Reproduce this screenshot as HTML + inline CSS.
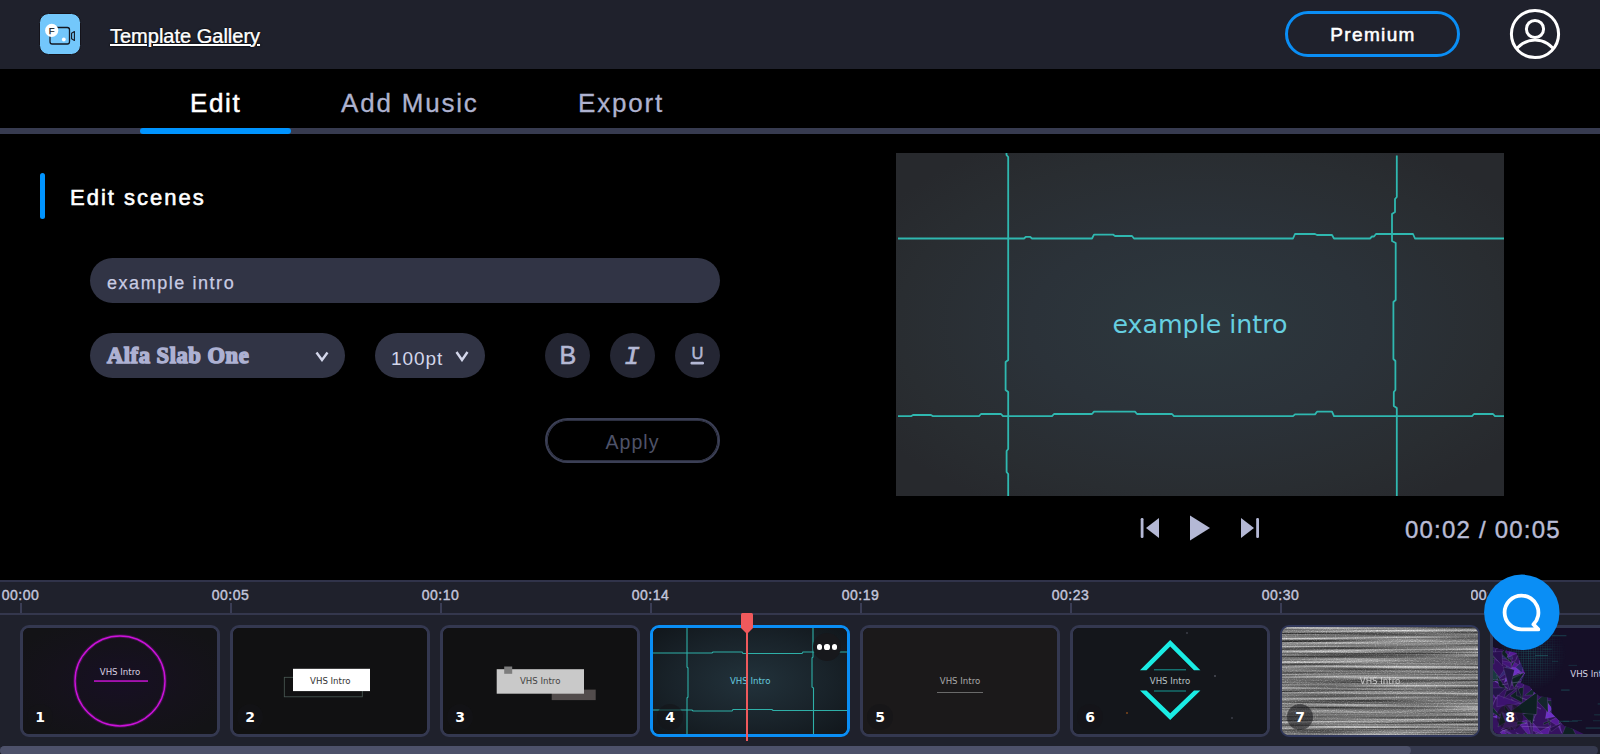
<!DOCTYPE html>
<html lang="en">
<head>
<meta charset="utf-8">
<title>Intro Maker</title>
<style>
*{box-sizing:border-box;margin:0;padding:0}
html,body{width:1600px;height:754px;overflow:hidden;background:#000;}
body{position:relative;font-family:"Liberation Sans",sans-serif;color:#fff;}
.abs{position:absolute}
#header{position:absolute;left:0;top:0;width:1600px;height:69px;background:#1f212c;}
#logo{position:absolute;left:39px;top:13px;width:42px;height:42px;}
#gallery{position:absolute;left:110px;top:24px;text-shadow:0 0 1px #000,0 0 2px #000;font-size:20px;line-height:24px;color:#fff;text-decoration:underline;letter-spacing:0;white-space:nowrap;-webkit-text-stroke:0.2px #fff;}
#premium{position:absolute;left:1285px;top:11px;width:175px;height:46px;border:3px solid #0a8ef5;border-radius:23px;text-align:center;font-size:19px;line-height:42px;letter-spacing:1.35px;color:#fff;-webkit-text-stroke:0.55px #fff;text-indent:1px;}
#avatar{position:absolute;left:1509px;top:8px;width:52px;height:52px;}
#tabs{position:absolute;left:0;top:69px;width:1600px;height:64px;background:#000;}
#tabline{position:absolute;left:0;top:128px;width:1600px;height:6px;background:#373b50;}
#tabactive{position:absolute;left:140px;top:128px;width:151px;height:6px;background:#0094ff;border-radius:3px;}
.tab{position:absolute;top:87px;font-size:26px;line-height:32px;white-space:nowrap;color:#aeb2cf;letter-spacing:1.8px;-webkit-text-stroke:0.3px #aeb2cf;}
.tab.on{color:#fff;-webkit-text-stroke:0.5px #fff;letter-spacing:1.6px}
#bar{position:absolute;left:40px;top:173px;width:5px;height:46px;border-radius:3px;background:#0094ff;}
#h2{position:absolute;left:70px;top:184px;font-size:22px;line-height:28px;white-space:nowrap;letter-spacing:2px;-webkit-text-stroke:0.6px #fff;}
.pill{position:absolute;background:#313445;border-radius:23px;height:45px;}
.pill span{position:absolute;white-space:nowrap;color:#c9cce3;}
.circ{position:absolute;top:333px;width:45px;height:45px;border-radius:50%;background:#242633;}
#apply{position:absolute;left:545px;top:418px;width:175px;height:45px;border:2px solid #3b3f55;box-shadow:inset 0 0 0 0.8px #3b3f55;border-radius:23px;text-align:center;font-size:19.5px;line-height:44px;color:#4e5268;letter-spacing:1px;}
#preview{position:absolute;left:896px;top:153px;width:608px;height:343px;}
#time{position:absolute;left:1405px;top:515.6px;font-size:24px;line-height:28px;color:#b9bcd6;white-space:nowrap;letter-spacing:1.2px;-webkit-text-stroke:0.4px #b9bcd6;}
#timeline{position:absolute;left:0;top:580px;width:1600px;height:174px;background:#1f212c;border-top:2px solid #30334a;}
#rline{position:absolute;left:0;top:613px;width:1600px;height:2px;background:#34374d;}
.tk{position:absolute;top:603px;width:2px;height:10px;background:#3a3d55;}
.tl{position:absolute;top:586px;width:80px;text-align:center;font-size:14px;line-height:18px;color:#c3c6dc;letter-spacing:0.5px;white-space:nowrap;-webkit-text-stroke:0.4px #c3c6dc;}
.th{position:absolute;top:625px;width:200px;height:112px;border:3px solid #343850;border-radius:9px;overflow:hidden;background:#121212;}
.th svg{position:absolute;left:-1px;top:-1px;}
.num{position:absolute;left:4px;top:76px;width:26px;height:26px;border-radius:50%;background:rgba(20,20,24,.55);color:#fff;font-family:"DejaVu Sans","Liberation Sans",sans-serif;font-weight:bold;font-size:14px;line-height:26px;text-align:center;}
.th.sel{border-color:#0a8ef5;}
.th.lt{border-width:2px;border-color:#30375a;}
.th.lt svg{left:0;top:0}
.th.lt .num{left:5px;top:77px}
.more{position:absolute;left:160px;top:5px;width:28px;height:28px;border-radius:50%;background:#17181c;}
.more i{position:absolute;top:11.4px;width:5.2px;height:5.2px;border-radius:50%;background:#fff;}
.more i:nth-child(1){left:3.6px}.more i:nth-child(2){left:11.4px}.more i:nth-child(3){left:19.2px}
#ph{position:absolute;left:746px;top:626px;width:2px;height:115px;background:#f0595c;}
#phh{position:absolute;left:741px;top:613px;width:12px;height:21px;}
#scroll{position:absolute;left:0;top:746px;width:1598px;height:9px;background:#363a4f;border-radius:5px;}
#scrollthumb{position:absolute;left:0;top:746px;width:1411px;height:9px;background:#4d516a;border-radius:5px;}
#chat{position:absolute;left:1484px;top:574px;width:78px;height:78px;}
</style>
</head>
<body>
<div id="header">
  <svg id="logo" viewBox="-1 -1 42 42">
    <rect x="-0.5" y="-0.5" width="41" height="41" rx="9" fill="#73c7fb" stroke="#15131a" stroke-width="1"/>
    <rect x="10" y="13.5" width="19.5" height="16.5" rx="2.2" fill="none" stroke="#141822" stroke-width="1.3"/>
    <path d="M31.6 19.2 L34.4 17.6 V26.4 L31.6 24.8 Z" fill="none" stroke="#141822" stroke-width="1.1" stroke-linejoin="round"/>
    <circle cx="11.7" cy="16.4" r="6.6" fill="#fff"/>
    <circle cx="23.8" cy="25.5" r="1.9" fill="#fff"/>
    <text x="11.7" y="19.8" font-family="Liberation Sans, sans-serif" font-size="9.5" fill="#141822" stroke="#141822" stroke-width="0.25" text-anchor="middle">F</text>
  </svg>
  <div id="gallery">Template Gallery</div>
  <div id="premium">Premium</div>
  <svg id="avatar" viewBox="0 0 52 52">
    <defs><clipPath id="avc"><circle cx="26" cy="26" r="23.5"/></clipPath></defs>
    <circle cx="26" cy="26" r="23.600" fill="none" stroke="#fff" stroke-width="3"/>
    <circle cx="26" cy="21" r="8.600" fill="none" stroke="#fff" stroke-width="3"/>
    <path d="M5 45 A23.500 23.500 0 0 1 47 45" fill="none" stroke="#fff" stroke-width="3" clip-path="url(#avc)"/>
  </svg>
</div>
<div id="tabs"></div>
<div id="tabline"></div>
<div id="tabactive"></div>
<div class="tab on" style="left:190px">Edit</div>
<div class="tab" style="left:341px">Add Music</div>
<div class="tab" style="left:578px">Export</div>

<div id="bar"></div>
<div id="h2">Edit scenes</div>

<div class="pill" style="left:90px;top:258px;width:630px"><span style="left:17px;top:13.5px;font-size:18px;line-height:22px;letter-spacing:1.55px;-webkit-text-stroke:0.25px #c9cce3">example intro</span></div>
<div class="pill" style="left:90px;top:333px;width:255px"><span style="left:17px;top:9px;font-family:'Liberation Serif',serif;font-weight:bold;font-size:22.5px;line-height:28px;color:#adb1d2;-webkit-text-stroke:1.5px #adb1d2;letter-spacing:0.55px">Alfa Slab One</span>
  <svg class="abs" style="left:224px;top:17px" width="16" height="12" viewBox="0 0 16 12"><path d="M2.500 2.500 L8 10 L13.500 2.500" fill="none" stroke="#d3d6ea" stroke-width="2.400"/></svg>
</div>
<div class="pill" style="left:375px;top:333px;width:110px"><span style="left:16px;top:13.5px;font-size:19px;line-height:24px;letter-spacing:0.95px;color:#d3d6ea">100pt</span>
  <svg class="abs" style="left:79px;top:17px" width="16" height="12" viewBox="0 0 16 12"><path d="M2.500 2 L8 10 L13.500 2" fill="none" stroke="#d3d6ea" stroke-width="2.400"/></svg>
</div>
<div class="circ" style="left:545px"><svg width="45" height="45" viewBox="0 0 45 45"><text x="22.8" y="31.4" text-anchor="middle" font-family="Liberation Sans, sans-serif" font-size="25" fill="#b4b8d4" stroke="#b4b8d4" stroke-width="0.6">B</text></svg></div>
<div class="circ" style="left:610px"><svg width="45" height="45" viewBox="0 0 45 45"><text x="22" y="31" text-anchor="middle" font-family="Liberation Mono, monospace" font-style="italic" font-size="26" fill="#b4b8d4" stroke="#b4b8d4" stroke-width="0.6">I</text></svg></div>
<div class="circ" style="left:675px"><svg width="45" height="45" viewBox="0 0 45 45"><text x="22.5" y="26.3" text-anchor="middle" font-family="Liberation Sans, sans-serif" font-size="16.5" fill="#b4b8d4" stroke="#b4b8d4" stroke-width="0.5">U</text><rect x="15.500" y="28.800" width="13.500" height="2.600" rx="1.2" fill="#b4b8d4"/></svg></div>
<div id="apply">Apply</div>

<svg id="preview" viewBox="0 0 608 343" preserveAspectRatio="none">
  <defs>
    <radialGradient id="pg" cx="50%" cy="50%" r="62%"><stop offset="0" stop-color="#2d383e"/><stop offset="0.45" stop-color="#2b3239"/><stop offset="0.8" stop-color="#292d31"/><stop offset="1" stop-color="#27292d"/></radialGradient>
  </defs>
  <rect width="608" height="343" fill="url(#pg)"/>
  <g fill="none" stroke="#2fb8b0" stroke-width="1.800" stroke-linejoin="round">
    <path d="M2 85.5 H128 L130 83.8 H134 L136 85.5 H196 L198 81.6 H217 L219 83 H236 L238 85.5 H397 L399 81 H419 L421 82 H436 L438 85.5 H474 L476 83.5 H478 L480 81 H517 L519 85.5 H608"/>
    <path d="M2 263.2 H15 L17 262 H35 L37 263.2 H83 L85 261 H105 L107 263.2 H156 L158 261 H196 L198 258.7 H239 L241 261 H276 L278 263.2 H397 L399 261.4 H419 L421 258.7 H436 L438 263.2 H576 L578 261 H597 L599 263.2 H608"/>
    <path d="M110.5 0 V2 L112.2 4 V207 L109.6 209 V237 L112.2 239 V296 L110.6 298 V319 L112.2 321 V343"/>
    <path d="M500.8 2.5 V44 L499 46 V59 L496 61 V88 L499.7 90 V147 L497.4 149 V206 L499.4 208 V237 L497.8 239 V253 L500.8 255 V343"/>
  </g>
  <text x="304" y="180" text-anchor="middle" font-family="DejaVu Sans, Liberation Sans, sans-serif" font-size="25.3" fill="#66cfe0">example intro</text>
</svg>

<svg class="abs" style="left:1138px;top:512px" width="126" height="32" viewBox="0 0 126 32">
  <g fill="#b4b8d5">
    <rect x="2.700" y="6" width="2.800" height="20" rx="1.200"/><path d="M21 6 V26 L8 16 Z"/>
    <path d="M52 3.500 L72 16 L52 28.500 Z"/>
    <path d="M103 6 V26 L116 16 Z"/><rect x="118.200" y="6" width="2.800" height="20" rx="1.200"/>
  </g>
</svg>
<div id="time">00:02 / 00:05</div>

<div id="timeline"></div>
<div id="rline"></div>
<div id="tlabels">
<div class="tk" style="left:20px"></div><div class="tl" style="left:-19.5px">00:00</div>
<div class="tk" style="left:230px"></div><div class="tl" style="left:190.5px">00:05</div>
<div class="tk" style="left:440px"></div><div class="tl" style="left:400.5px">00:10</div>
<div class="tk" style="left:650px"></div><div class="tl" style="left:610.5px">00:14</div>
<div class="tk" style="left:860px"></div><div class="tl" style="left:820.5px">00:19</div>
<div class="tk" style="left:1070px"></div><div class="tl" style="left:1030.5px">00:23</div>
<div class="tk" style="left:1280px"></div><div class="tl" style="left:1240.5px">00:30</div>
<div class="tk" style="left:1490px"></div><div class="tl" style="left:1470.5px;width:17px;overflow:hidden;text-align:left">00:35</div>
</div><!--/tl-->
<div id="thumbs">
<div class="th" style="left:20px"><svg width="196" height="108" viewBox="0 0 196 108"><defs><radialGradient id="g1" cx="50%" cy="50%" r="60%"><stop offset="0" stop-color="#170f24"/><stop offset="0.55" stop-color="#15121b"/><stop offset="1" stop-color="#131316"/></radialGradient></defs>
<rect width="196" height="108" fill="url(#g1)"/>
<circle cx="98" cy="54" r="45" fill="none" stroke="#8a0f9a" stroke-width="3.600" opacity="0.35"/>
<circle cx="98" cy="54" r="45" fill="none" stroke="#cc12da" stroke-width="1.400"/>
<rect x="72" y="53.300" width="54" height="1.500" fill="#c613d2"/>
<text x="98" y="48" text-anchor="middle" font-family="DejaVu Sans, Liberation Sans, sans-serif" font-size="8.6" fill="#d9cfe0" opacity="1">VHS Intro</text></svg><div class="num">1</div></div>
<div class="th" style="left:230px"><svg width="196" height="108" viewBox="0 0 196 108"><rect width="196" height="108" fill="#111112"/>
<rect x="52.300" y="50.300" width="78" height="19.500" fill="none" stroke="#4a5a55" stroke-width="0.8"/>
<rect x="61" y="41.800" width="77" height="22.300" fill="#ffffff"/>
<text x="98.3" y="57.3" text-anchor="middle" font-family="DejaVu Sans, Liberation Sans, sans-serif" font-size="8.6" fill="#333" opacity="1">VHS Intro</text></svg><div class="num">2</div></div>
<div class="th" style="left:440px"><svg width="196" height="108" viewBox="0 0 196 108"><rect width="196" height="108" fill="#111112"/>
<rect x="109.700" y="62.600" width="44" height="10.500" fill="#524c4c"/>
<rect x="54.700" y="42.200" width="87.300" height="24.500" fill="#c9c9c9"/>
<rect x="62.200" y="39.500" width="8" height="7.300" fill="#7d7d7d"/>
<text x="98.2" y="57.2" text-anchor="middle" font-family="DejaVu Sans, Liberation Sans, sans-serif" font-size="8.6" fill="#444" opacity="1">VHS Intro</text></svg><div class="num">3</div></div>
<div class="th sel" style="left:650px"><svg width="196" height="108" viewBox="0 0 196 108"><defs><radialGradient id="g4" cx="50%" cy="50%" r="65%"><stop offset="0" stop-color="#22323b"/><stop offset="0.6" stop-color="#19232a"/><stop offset="1" stop-color="#12181d"/></radialGradient></defs>
<rect width="196" height="108" fill="url(#g4)"/>
<g fill="none" stroke="#2eb0a8" stroke-width="1.100"><path d="M0 26 H60 L61 25 H90 L91 26.500 H150 L151 25 H196"/><path d="M0 83 H40 L41 84 H80 L81 82.500 H120 L121 83.500 H196"/><path d="M35 0 V40 L36 41 V70 L35 71 V108"/><path d="M161 0 V30 L160 31 V60 L161.500 61 V108"/></g>
<text x="98.2" y="57.2" text-anchor="middle" font-family="DejaVu Sans, Liberation Sans, sans-serif" font-size="8.6" fill="#66cade" opacity="1">VHS Intro</text></svg><div class="num">4</div><div class="more"><i></i><i></i><i></i></div></div>
<div class="th" style="left:860px"><svg width="196" height="108" viewBox="0 0 196 108"><rect width="196" height="108" fill="#1b191a"/>
<rect x="75" y="65" width="46" height="1" fill="#6a6a6a"/>
<text x="98" y="57.2" text-anchor="middle" font-family="DejaVu Sans, Liberation Sans, sans-serif" font-size="8.6" fill="#a8a8a8" opacity="1">VHS Intro</text></svg><div class="num">5</div></div>
<div class="th" style="left:1070px"><svg width="196" height="108" viewBox="0 0 196 108"><rect width="196" height="108" fill="#14161b"/>
<g fill="#1aece4"><path d="M68 43.300 L98.200 13 L128.400 43.300 H122 L98.200 19.600 L74.500 43.300 Z"/><path d="M68 63.600 H74.500 L98.200 86.300 L122 63.600 H128.400 L98.200 93 Z"/></g>
<g stroke="#159a96" stroke-width="1"><path d="M82 42.800 H114"/><path d="M82 64 H114"/></g>
<circle cx="55" cy="86" r="0.8" fill="#c96a1a"/><circle cx="143" cy="49" r="0.7" fill="#889"/><circle cx="160" cy="91" r="0.7" fill="#667"/><circle cx="115" cy="6" r="0.7" fill="#667"/>
<text x="98" y="57.2" text-anchor="middle" font-family="DejaVu Sans, Liberation Sans, sans-serif" font-size="8.6" fill="#b8c2c4" opacity="1">VHS Intro</text></svg><div class="num">6</div></div>
<div class="th lt" style="left:1280px"><svg width="196" height="108" viewBox="0 0 196 108"><defs><filter id="nz" x="0" y="0" width="100%" height="100%" color-interpolation-filters="sRGB">
<feTurbulence type="fractalNoise" baseFrequency="0.006 0.38" numOctaves="2" seed="11" result="a"/>
<feColorMatrix in="a" type="matrix" values="1.0 0 0 0 -0.03  1.0 0 0 0 -0.03  1.0 0 0 0 -0.03  0 0 0 0 1" result="b"/>
<feTurbulence type="fractalNoise" baseFrequency="0.9 0.9" numOctaves="1" seed="5" result="c"/>
<feColorMatrix in="c" type="matrix" values="0.5 0 0 0 -0.25  0.5 0 0 0 -0.25  0.5 0 0 0 -0.25  0 0 0 0 1" result="d"/>
<feComposite in="b" in2="d" operator="arithmetic" k1="0" k2="1" k3="1" k4="0"/>
</filter></defs>
<rect width="196" height="108" fill="#858585"/>
<rect width="196" height="108" filter="url(#nz)"/>
<text x="98" y="57.2" text-anchor="middle" font-family="DejaVu Sans, Liberation Sans, sans-serif" font-size="8.6" fill="#e2e2e2" opacity="0.8">VHS Intro</text></svg><div class="num">7</div></div>
<div class="th" style="left:1490px"><svg width="196" height="108" viewBox="0 0 196 108"><defs><pattern id="dots" width="2.400" height="2.400" patternUnits="userSpaceOnUse"><rect x="0" y="0" width="2.400" height="0.700" fill="#1d5f64" opacity="0.55"/><rect x="0" y="0" width="0.700" height="2.400" fill="#1d5f64" opacity="0.55"/></pattern>
<clipPath id="pc"><polygon points="0,20.3 24.5,26.1 32.8,46 28.6,56 37.7,59.3 41,64.3 47.7,69.2 59.3,70.9 59.3,85.8 65.9,92.4 72.5,99 82.5,102.4 92.4,107.3 94,108 0,108"/></clipPath>
<radialGradient id="g8" cx="35%" cy="35%" r="45%"><stop offset="0" stop-color="#fff" stop-opacity="1"/><stop offset="1" stop-color="#fff" stop-opacity="0"/></radialGradient>
<mask id="m8"><rect x="10" y="0" width="80" height="80" fill="url(#g8)"/></mask></defs>
<rect width="196" height="108" fill="#150f27"/>
<rect x="10" y="0" width="80" height="80" fill="url(#dots)" mask="url(#m8)"/>
<rect x="177.7" y="17.1" width="5.2" height="0.900" fill="#1f6a6e" opacity="0.33"/><rect x="48.5" y="99.5" width="12.4" height="0.900" fill="#1f6a6e" opacity="0.69"/><rect x="63.5" y="93.8" width="13.5" height="0.900" fill="#1f6a6e" opacity="0.53"/><rect x="69.1" y="62.6" width="8.5" height="0.900" fill="#1f6a6e" opacity="0.65"/><rect x="80.1" y="93.1" width="10.0" height="0.900" fill="#1f6a6e" opacity="0.31"/><rect x="184.3" y="27.9" width="15.6" height="0.900" fill="#1f6a6e" opacity="0.37"/><rect x="155.0" y="65.3" width="9.3" height="0.900" fill="#1f6a6e" opacity="0.59"/><rect x="110.2" y="17.5" width="14.9" height="0.900" fill="#1f6a6e" opacity="0.50"/><rect x="109.8" y="100.7" width="5.5" height="0.900" fill="#1f6a6e" opacity="0.57"/><rect x="182.7" y="70.2" width="12.2" height="0.900" fill="#1f6a6e" opacity="0.34"/><rect x="47.8" y="12.4" width="5.1" height="0.900" fill="#1f6a6e" opacity="0.55"/><rect x="60.1" y="8.3" width="14.3" height="0.900" fill="#1f6a6e" opacity="0.58"/><rect x="155.6" y="38.9" width="15.3" height="0.900" fill="#1f6a6e" opacity="0.33"/><rect x="60.1" y="33.9" width="6.1" height="0.900" fill="#1f6a6e" opacity="0.37"/><rect x="146.8" y="13.2" width="15.0" height="0.900" fill="#1f6a6e" opacity="0.55"/><rect x="162.1" y="8.7" width="5.8" height="0.900" fill="#1f6a6e" opacity="0.66"/><rect x="158.1" y="33.2" width="8.1" height="0.900" fill="#1f6a6e" opacity="0.55"/><rect x="181.5" y="37.9" width="10.2" height="0.900" fill="#1f6a6e" opacity="0.64"/><rect x="43.1" y="28.1" width="12.9" height="0.900" fill="#1f6a6e" opacity="0.60"/><rect x="178.2" y="94.4" width="15.9" height="0.900" fill="#1f6a6e" opacity="0.37"/><rect x="102.1" y="87.4" width="15.1" height="0.900" fill="#1f6a6e" opacity="0.44"/><rect x="76.5" y="37.9" width="8.6" height="0.900" fill="#1f6a6e" opacity="0.35"/><rect x="100.9" y="93.3" width="11.2" height="0.900" fill="#1f6a6e" opacity="0.34"/><rect x="93.7" y="100.6" width="14.9" height="0.900" fill="#1f6a6e" opacity="0.64"/><rect x="103.3" y="43.7" width="6.7" height="0.900" fill="#1f6a6e" opacity="0.59"/><rect x="129.6" y="12.6" width="4.8" height="0.900" fill="#1f6a6e" opacity="0.48"/><rect x="112.1" y="21.3" width="15.0" height="0.900" fill="#1f6a6e" opacity="0.38"/><rect x="105.7" y="76.5" width="11.1" height="0.900" fill="#1f6a6e" opacity="0.55"/><rect x="50.6" y="21.7" width="9.4" height="0.900" fill="#1f6a6e" opacity="0.36"/><rect x="71.3" y="93.8" width="14.5" height="0.900" fill="#1f6a6e" opacity="0.46"/><rect x="171.9" y="93.5" width="11.5" height="0.900" fill="#1f6a6e" opacity="0.60"/><rect x="139.1" y="37.5" width="11.1" height="0.900" fill="#1f6a6e" opacity="0.38"/><rect x="149.9" y="76.5" width="5.8" height="0.900" fill="#1f6a6e" opacity="0.48"/><rect x="176.4" y="13.2" width="15.3" height="0.900" fill="#1f6a6e" opacity="0.51"/>
<g clip-path="url(#pc)"><rect width="100" height="108" fill="#35125f"/><path d="M12.0 75.4 L19.6 89.7 L12.8 82.3 Z" fill="#0e2022" stroke="#b7a2e6" stroke-width="0.35" stroke-opacity="0.45"/><path d="M72.8 7.1 L82.1 29.5 L80.4 15.5 Z" fill="#1a3a40" stroke="#b7a2e6" stroke-width="0.35" stroke-opacity="0.45"/><path d="M57.5 11.9 L66.3 16.7 L50.9 25.4 Z" fill="#3d1370" stroke="#b7a2e6" stroke-width="0.35" stroke-opacity="0.45"/><path d="M80.6 16.2 L71.1 20.6 L76.4 23.2 Z" fill="#5f1fa4" stroke="#b7a2e6" stroke-width="0.35" stroke-opacity="0.45"/><path d="M85.6 43.5 L81.8 38.4 L80.8 24.9 Z" fill="#551b96" stroke="#b7a2e6" stroke-width="0.35" stroke-opacity="0.45"/><path d="M45.0 53.9 L47.8 62.1 L51.9 49.7 Z" fill="#551b96" stroke="#b7a2e6" stroke-width="0.35" stroke-opacity="0.45"/><path d="M38.0 26.2 L34.6 18.4 L35.4 22.4 Z" fill="#0e2022" stroke="#b7a2e6" stroke-width="0.35" stroke-opacity="0.45"/><path d="M41.7 51.6 L56.9 56.5 L48.2 54.4 Z" fill="#241548" stroke="#b7a2e6" stroke-width="0.35" stroke-opacity="0.45"/><path d="M11.2 30.1 L10.8 18.9 L21.1 36.7 Z" fill="#0e2022" stroke="#b7a2e6" stroke-width="0.35" stroke-opacity="0.45"/><path d="M39.4 122.2 L36.4 107.3 L29.3 122.0 Z" fill="#11292b" stroke="#b7a2e6" stroke-width="0.35" stroke-opacity="0.45"/><path d="M57.1 49.1 L47.8 65.4 L55.4 48.6 Z" fill="#0e2022" stroke="#b7a2e6" stroke-width="0.35" stroke-opacity="0.45"/><path d="M20.8 32.1 L17.8 22.3 L8.3 31.6 Z" fill="#2d2466" stroke="#b7a2e6" stroke-width="0.35" stroke-opacity="0.45"/><path d="M98.8 58.1 L77.0 58.2 L95.1 61.5 Z" fill="#551b96" stroke="#b7a2e6" stroke-width="0.35" stroke-opacity="0.45"/><path d="M31.7 58.3 L30.2 75.7 L18.0 69.0 Z" fill="#0e2022" stroke="#b7a2e6" stroke-width="0.35" stroke-opacity="0.45"/><path d="M79.5 80.4 L88.5 65.5 L73.8 64.7 Z" fill="#521890" stroke="#b7a2e6" stroke-width="0.35" stroke-opacity="0.45"/><path d="M54.4 88.2 L57.2 98.2 L58.6 97.3 Z" fill="#11292b" stroke="#b7a2e6" stroke-width="0.35" stroke-opacity="0.45"/><path d="M18.4 102.7 L15.9 98.4 L18.4 90.7 Z" fill="#521890" stroke="#b7a2e6" stroke-width="0.35" stroke-opacity="0.45"/><path d="M36.1 106.2 L29.3 108.4 L36.9 104.0 Z" fill="#0e2022" stroke="#b7a2e6" stroke-width="0.35" stroke-opacity="0.45"/><path d="M29.1 45.8 L36.3 58.4 L23.5 48.6 Z" fill="#2d2466" stroke="#b7a2e6" stroke-width="0.35" stroke-opacity="0.45"/><path d="M50.8 49.9 L61.2 40.2 L58.1 43.2 Z" fill="#0e2022" stroke="#b7a2e6" stroke-width="0.35" stroke-opacity="0.45"/><path d="M19.8 33.9 L18.8 55.9 L39.3 45.0 Z" fill="#521890" stroke="#b7a2e6" stroke-width="0.35" stroke-opacity="0.45"/><path d="M64.3 91.8 L54.7 73.5 L67.5 73.9 Z" fill="#14262c" stroke="#b7a2e6" stroke-width="0.35" stroke-opacity="0.45"/><path d="M65.3 87.7 L63.5 94.1 L69.8 106.3 Z" fill="#5f1fa4" stroke="#b7a2e6" stroke-width="0.35" stroke-opacity="0.45"/><path d="M1.8 26.9 L-1.3 35.2 L2.1 37.2 Z" fill="#14262c" stroke="#b7a2e6" stroke-width="0.35" stroke-opacity="0.45"/><path d="M22.8 110.6 L29.9 113.9 L10.6 100.2 Z" fill="#241548" stroke="#b7a2e6" stroke-width="0.35" stroke-opacity="0.45"/><path d="M78.5 85.1 L85.4 82.9 L87.3 92.2 Z" fill="#11292b" stroke="#b7a2e6" stroke-width="0.35" stroke-opacity="0.45"/><path d="M69.1 39.3 L61.8 44.5 L63.0 31.0 Z" fill="#2e1b5e" stroke="#b7a2e6" stroke-width="0.35" stroke-opacity="0.45"/><path d="M89.3 68.5 L79.9 62.8 L84.2 64.0 Z" fill="#14262c" stroke="#b7a2e6" stroke-width="0.35" stroke-opacity="0.45"/><path d="M53.4 91.5 L56.1 76.5 L66.1 89.0 Z" fill="#6d2fc6" stroke="#b7a2e6" stroke-width="0.35" stroke-opacity="0.45"/><path d="M-0.5 67.0 L-5.9 56.9 L-1.5 58.2 Z" fill="#241548" stroke="#b7a2e6" stroke-width="0.35" stroke-opacity="0.45"/><path d="M10.3 52.6 L20.8 50.6 L19.8 48.9 Z" fill="#1a3a40" stroke="#b7a2e6" stroke-width="0.35" stroke-opacity="0.45"/><path d="M41.6 75.0 L43.8 75.7 L27.8 70.4 Z" fill="#5f1fa4" stroke="#b7a2e6" stroke-width="0.35" stroke-opacity="0.45"/><path d="M44.3 85.6 L39.5 96.7 L40.6 95.7 Z" fill="#342672" stroke="#b7a2e6" stroke-width="0.35" stroke-opacity="0.45"/><path d="M13.9 21.6 L17.0 33.9 L5.4 23.3 Z" fill="#0e2022" stroke="#b7a2e6" stroke-width="0.35" stroke-opacity="0.45"/><path d="M33.4 46.1 L36.8 48.2 L24.3 45.4 Z" fill="#6d2fc6" stroke="#b7a2e6" stroke-width="0.35" stroke-opacity="0.45"/><path d="M55.6 55.8 L39.3 63.4 L42.7 43.7 Z" fill="#6d2fc6" stroke="#b7a2e6" stroke-width="0.35" stroke-opacity="0.45"/><path d="M45.0 73.6 L56.1 85.6 L55.2 65.1 Z" fill="#14262c" stroke="#b7a2e6" stroke-width="0.35" stroke-opacity="0.45"/><path d="M74.6 37.7 L74.7 49.3 L61.0 48.5 Z" fill="#6d2fc6" stroke="#b7a2e6" stroke-width="0.35" stroke-opacity="0.45"/><path d="M-0.3 55.9 L0.6 41.7 L7.4 50.6 Z" fill="#1a3a40" stroke="#b7a2e6" stroke-width="0.35" stroke-opacity="0.45"/><path d="M23.0 117.3 L25.4 108.7 L7.1 109.7 Z" fill="#11292b" stroke="#b7a2e6" stroke-width="0.35" stroke-opacity="0.45"/><path d="M33.2 94.3 L42.7 93.2 L38.3 94.0 Z" fill="#0e2022" stroke="#b7a2e6" stroke-width="0.35" stroke-opacity="0.45"/><path d="M67.3 47.5 L65.6 28.8 L73.8 39.0 Z" fill="#2a1050" stroke="#b7a2e6" stroke-width="0.35" stroke-opacity="0.45"/><path d="M67.1 86.4 L70.1 87.9 L67.4 89.1 Z" fill="#2a1050" stroke="#b7a2e6" stroke-width="0.35" stroke-opacity="0.45"/><path d="M15.4 87.9 L9.6 86.3 L10.0 84.8 Z" fill="#4a1684" stroke="#b7a2e6" stroke-width="0.35" stroke-opacity="0.45"/><path d="M-1.8 91.4 L-10.7 73.4 L1.8 87.1 Z" fill="#551b96" stroke="#b7a2e6" stroke-width="0.35" stroke-opacity="0.45"/><path d="M52.7 13.8 L59.1 20.4 L61.8 24.9 Z" fill="#5f1fa4" stroke="#b7a2e6" stroke-width="0.35" stroke-opacity="0.45"/><path d="M77.5 93.8 L88.4 96.7 L76.5 95.1 Z" fill="#5f1fa4" stroke="#b7a2e6" stroke-width="0.35" stroke-opacity="0.45"/><path d="M74.6 46.9 L64.2 41.8 L72.9 40.1 Z" fill="#2e1b5e" stroke="#b7a2e6" stroke-width="0.35" stroke-opacity="0.45"/><path d="M49.0 81.6 L48.4 82.1 L40.4 78.2 Z" fill="#4a1684" stroke="#b7a2e6" stroke-width="0.35" stroke-opacity="0.45"/><path d="M26.1 96.7 L22.4 102.6 L18.2 98.2 Z" fill="#551b96" stroke="#b7a2e6" stroke-width="0.35" stroke-opacity="0.45"/><path d="M48.8 111.1 L43.4 105.3 L51.2 111.1 Z" fill="#2a1050" stroke="#b7a2e6" stroke-width="0.35" stroke-opacity="0.45"/><path d="M62.3 79.7 L76.3 79.5 L73.7 80.7 Z" fill="#5f1fa4" stroke="#b7a2e6" stroke-width="0.35" stroke-opacity="0.45"/><path d="M27.2 33.6 L27.6 37.4 L29.9 26.6 Z" fill="#521890" stroke="#b7a2e6" stroke-width="0.35" stroke-opacity="0.45"/><path d="M51.6 97.9 L51.7 95.7 L63.0 92.1 Z" fill="#0e2022" stroke="#b7a2e6" stroke-width="0.35" stroke-opacity="0.45"/><path d="M51.6 16.9 L44.6 25.5 L55.6 24.5 Z" fill="#521890" stroke="#b7a2e6" stroke-width="0.35" stroke-opacity="0.45"/><path d="M41.0 118.5 L33.8 110.2 L23.8 105.5 Z" fill="#551b96" stroke="#b7a2e6" stroke-width="0.35" stroke-opacity="0.45"/><path d="M21.3 109.1 L17.6 105.4 L9.1 102.5 Z" fill="#551b96" stroke="#b7a2e6" stroke-width="0.35" stroke-opacity="0.45"/><path d="M49.6 47.7 L50.6 48.7 L69.5 60.2 Z" fill="#2e1b5e" stroke="#b7a2e6" stroke-width="0.35" stroke-opacity="0.45"/><path d="M30.4 60.9 L18.9 58.0 L33.2 53.7 Z" fill="#3d1370" stroke="#b7a2e6" stroke-width="0.35" stroke-opacity="0.45"/><path d="M55.7 54.6 L58.6 57.0 L54.9 54.3 Z" fill="#521890" stroke="#b7a2e6" stroke-width="0.35" stroke-opacity="0.45"/><path d="M34.4 40.6 L36.2 37.6 L34.6 37.4 Z" fill="#2a1050" stroke="#b7a2e6" stroke-width="0.35" stroke-opacity="0.45"/><path d="M12.3 55.6 L31.9 41.3 L17.3 40.2 Z" fill="#6d2fc6" stroke="#b7a2e6" stroke-width="0.35" stroke-opacity="0.45"/><path d="M88.1 101.7 L88.0 104.8 L91.3 93.1 Z" fill="#241548" stroke="#b7a2e6" stroke-width="0.35" stroke-opacity="0.45"/><path d="M18.9 49.4 L32.5 45.7 L21.9 61.2 Z" fill="#0e2022" stroke="#b7a2e6" stroke-width="0.35" stroke-opacity="0.45"/><path d="M84.1 113.3 L75.0 105.4 L75.4 113.0 Z" fill="#1a3a40" stroke="#b7a2e6" stroke-width="0.35" stroke-opacity="0.45"/><path d="M34.6 93.3 L39.7 111.8 L25.3 94.9 Z" fill="#551b96" stroke="#b7a2e6" stroke-width="0.35" stroke-opacity="0.45"/><path d="M1.0 73.9 L-0.0 80.5 L-0.5 75.4 Z" fill="#1b1438" stroke="#b7a2e6" stroke-width="0.35" stroke-opacity="0.45"/><path d="M16.0 61.6 L1.5 52.7 L2.9 54.6 Z" fill="#6d2fc6" stroke="#b7a2e6" stroke-width="0.35" stroke-opacity="0.45"/><path d="M5.2 53.0 L18.7 42.7 L17.7 34.7 Z" fill="#342672" stroke="#b7a2e6" stroke-width="0.35" stroke-opacity="0.45"/><path d="M0.4 80.3 L-11.5 87.4 L4.9 85.0 Z" fill="#2e1b5e" stroke="#b7a2e6" stroke-width="0.35" stroke-opacity="0.45"/><path d="M85.1 69.0 L87.9 72.5 L76.6 70.9 Z" fill="#431578" stroke="#b7a2e6" stroke-width="0.35" stroke-opacity="0.45"/><path d="M42.4 83.7 L30.6 87.2 L40.4 97.4 Z" fill="#0e2022" stroke="#b7a2e6" stroke-width="0.35" stroke-opacity="0.45"/><path d="M107.9 22.9 L101.3 32.4 L86.4 27.5 Z" fill="#4a1684" stroke="#b7a2e6" stroke-width="0.35" stroke-opacity="0.45"/><path d="M87.3 103.3 L90.3 98.4 L84.8 97.7 Z" fill="#521890" stroke="#b7a2e6" stroke-width="0.35" stroke-opacity="0.45"/><path d="M61.5 21.6 L70.7 10.7 L76.8 27.8 Z" fill="#2a1050" stroke="#b7a2e6" stroke-width="0.35" stroke-opacity="0.45"/><path d="M15.8 63.7 L4.7 48.1 L7.0 59.3 Z" fill="#0e2022" stroke="#b7a2e6" stroke-width="0.35" stroke-opacity="0.45"/><path d="M33.0 107.5 L27.1 109.4 L24.4 109.0 Z" fill="#6d2fc6" stroke="#b7a2e6" stroke-width="0.35" stroke-opacity="0.45"/><path d="M44.8 16.9 L46.9 17.7 L54.5 23.3 Z" fill="#551b96" stroke="#b7a2e6" stroke-width="0.35" stroke-opacity="0.45"/><path d="M19.7 36.8 L23.6 32.9 L17.7 43.9 Z" fill="#14262c" stroke="#b7a2e6" stroke-width="0.35" stroke-opacity="0.45"/><path d="M26.8 25.7 L26.4 26.1 L23.9 32.8 Z" fill="#1b1438" stroke="#b7a2e6" stroke-width="0.35" stroke-opacity="0.45"/><path d="M24.7 69.0 L29.4 69.5 L24.0 57.5 Z" fill="#1b1438" stroke="#b7a2e6" stroke-width="0.35" stroke-opacity="0.45"/><path d="M13.2 24.9 L16.6 20.8 L18.3 30.1 Z" fill="#431578" stroke="#b7a2e6" stroke-width="0.35" stroke-opacity="0.45"/><path d="M12.0 78.1 L19.5 76.1 L25.7 92.8 Z" fill="#431578" stroke="#b7a2e6" stroke-width="0.35" stroke-opacity="0.45"/><path d="M32.7 68.4 L41.6 67.8 L43.1 59.8 Z" fill="#11292b" stroke="#b7a2e6" stroke-width="0.35" stroke-opacity="0.45"/><path d="M88.9 43.5 L87.0 43.1 L86.1 40.1 Z" fill="#5f1fa4" stroke="#b7a2e6" stroke-width="0.35" stroke-opacity="0.45"/><path d="M7.5 22.6 L-8.5 32.3 L-3.7 16.0 Z" fill="#4a1684" stroke="#b7a2e6" stroke-width="0.35" stroke-opacity="0.45"/><path d="M90.7 33.7 L84.4 38.8 L90.8 19.0 Z" fill="#0e2022" stroke="#b7a2e6" stroke-width="0.35" stroke-opacity="0.45"/><path d="M67.9 88.4 L67.7 100.3 L57.9 94.0 Z" fill="#551b96" stroke="#b7a2e6" stroke-width="0.35" stroke-opacity="0.45"/><path d="M10.5 101.6 L35.2 96.1 L13.2 94.4 Z" fill="#5f1fa4" stroke="#b7a2e6" stroke-width="0.35" stroke-opacity="0.45"/><path d="M31.1 32.2 L33.2 33.6 L34.1 23.9 Z" fill="#4a1684" stroke="#b7a2e6" stroke-width="0.35" stroke-opacity="0.45"/><path d="M67.2 81.6 L74.9 88.5 L66.9 97.3 Z" fill="#1a3a40" stroke="#b7a2e6" stroke-width="0.35" stroke-opacity="0.45"/><path d="M45.8 39.8 L30.0 57.3 L41.5 42.6 Z" fill="#2a1050" stroke="#b7a2e6" stroke-width="0.35" stroke-opacity="0.45"/><path d="M-14.2 65.2 L-1.4 81.1 L-6.8 86.7 Z" fill="#1a3a40" stroke="#b7a2e6" stroke-width="0.35" stroke-opacity="0.45"/><path d="M34.1 31.3 L29.8 45.6 L23.5 40.2 Z" fill="#2d2466" stroke="#b7a2e6" stroke-width="0.35" stroke-opacity="0.45"/><path d="M42.8 107.2 L59.0 98.4 L53.3 116.0 Z" fill="#551b96" stroke="#b7a2e6" stroke-width="0.35" stroke-opacity="0.45"/><path d="M20.7 84.0 L17.7 87.2 L12.2 90.7 Z" fill="#0e2022" stroke="#b7a2e6" stroke-width="0.35" stroke-opacity="0.45"/><path d="M45.2 106.5 L48.5 114.0 L60.5 108.5 Z" fill="#0e2022" stroke="#b7a2e6" stroke-width="0.35" stroke-opacity="0.45"/><path d="M78.7 102.6 L92.8 87.8 L77.8 100.7 Z" fill="#4a1684" stroke="#b7a2e6" stroke-width="0.35" stroke-opacity="0.45"/><path d="M88.5 73.8 L97.8 78.6 L94.8 63.6 Z" fill="#4a1684" stroke="#b7a2e6" stroke-width="0.35" stroke-opacity="0.45"/><path d="M14.4 54.3 L28.9 47.6 L27.8 46.7 Z" fill="#11292b" stroke="#b7a2e6" stroke-width="0.35" stroke-opacity="0.45"/><path d="M47.6 59.8 L40.0 73.7 L42.7 62.1 Z" fill="#551b96" stroke="#b7a2e6" stroke-width="0.35" stroke-opacity="0.45"/><path d="M50.6 107.0 L41.1 103.9 L41.1 95.9 Z" fill="#551b96" stroke="#b7a2e6" stroke-width="0.35" stroke-opacity="0.45"/><path d="M68.4 66.8 L56.9 86.7 L75.7 68.2 Z" fill="#11292b" stroke="#b7a2e6" stroke-width="0.35" stroke-opacity="0.45"/><path d="M25.9 13.2 L32.3 23.2 L14.8 30.6 Z" fill="#551b96" stroke="#b7a2e6" stroke-width="0.35" stroke-opacity="0.45"/><path d="M24.9 97.7 L34.7 95.8 L25.5 94.3 Z" fill="#11292b" stroke="#b7a2e6" stroke-width="0.35" stroke-opacity="0.45"/><path d="M70.3 107.5 L76.2 92.8 L84.5 109.0 Z" fill="#0e2022" stroke="#b7a2e6" stroke-width="0.35" stroke-opacity="0.45"/><path d="M52.5 47.9 L61.8 51.1 L54.9 49.0 Z" fill="#2a1050" stroke="#b7a2e6" stroke-width="0.35" stroke-opacity="0.45"/><path d="M78.8 36.3 L72.7 31.7 L95.1 32.1 Z" fill="#342672" stroke="#b7a2e6" stroke-width="0.35" stroke-opacity="0.45"/><path d="M42.0 99.8 L57.1 100.4 L29.8 99.3 Z" fill="#551b96" stroke="#b7a2e6" stroke-width="0.35" stroke-opacity="0.45"/><path d="M77.5 36.4 L77.2 43.2 L85.2 31.1 Z" fill="#551b96" stroke="#b7a2e6" stroke-width="0.35" stroke-opacity="0.45"/><path d="M20.0 74.2 L20.2 84.7 L11.1 73.0 Z" fill="#6d2fc6" stroke="#b7a2e6" stroke-width="0.35" stroke-opacity="0.45"/><path d="M93.9 94.8 L97.5 92.8 L97.1 82.5 Z" fill="#431578" stroke="#b7a2e6" stroke-width="0.35" stroke-opacity="0.45"/><path d="M19.2 71.8 L23.5 75.5 L23.9 77.3 Z" fill="#11292b" stroke="#b7a2e6" stroke-width="0.35" stroke-opacity="0.45"/><path d="M54.4 21.0 L55.4 20.1 L53.6 10.5 Z" fill="#1a3a40" stroke="#b7a2e6" stroke-width="0.35" stroke-opacity="0.45"/><path d="M5.6 66.4 L-6.7 66.4 L11.1 74.8 Z" fill="#4a1684" stroke="#b7a2e6" stroke-width="0.35" stroke-opacity="0.45"/><path d="M0.8 89.8 L19.2 95.8 L11.2 86.0 Z" fill="#6d2fc6" stroke="#b7a2e6" stroke-width="0.35" stroke-opacity="0.45"/><path d="M19.9 41.8 L18.5 35.3 L3.5 32.6 Z" fill="#431578" stroke="#b7a2e6" stroke-width="0.35" stroke-opacity="0.45"/><path d="M3.8 70.7 L14.3 60.7 L-4.6 61.0 Z" fill="#241548" stroke="#b7a2e6" stroke-width="0.35" stroke-opacity="0.45"/><path d="M76.9 80.3 L92.4 74.0 L90.4 77.8 Z" fill="#5f1fa4" stroke="#b7a2e6" stroke-width="0.35" stroke-opacity="0.45"/><path d="M51.8 18.2 L48.9 26.4 L47.4 28.1 Z" fill="#342672" stroke="#b7a2e6" stroke-width="0.35" stroke-opacity="0.45"/><path d="M57.4 61.9 L59.8 53.3 L49.6 46.4 Z" fill="#6d2fc6" stroke="#b7a2e6" stroke-width="0.35" stroke-opacity="0.45"/><path d="M1.3 32.1 L7.1 29.9 L-2.1 30.8 Z" fill="#11292b" stroke="#b7a2e6" stroke-width="0.35" stroke-opacity="0.45"/><path d="M9.1 105.5 L7.9 105.3 L17.4 101.3 Z" fill="#6d2fc6" stroke="#b7a2e6" stroke-width="0.35" stroke-opacity="0.45"/><path d="M9.8 57.8 L29.0 54.8 L30.1 54.0 Z" fill="#1a3a40" stroke="#b7a2e6" stroke-width="0.35" stroke-opacity="0.45"/><path d="M-7.9 96.5 L-4.8 97.8 L-10.8 102.9 Z" fill="#0e2022" stroke="#b7a2e6" stroke-width="0.35" stroke-opacity="0.45"/><path d="M9.3 84.7 L6.0 100.0 L13.5 95.2 Z" fill="#14262c" stroke="#b7a2e6" stroke-width="0.35" stroke-opacity="0.45"/><path d="M5.4 68.0 L28.9 76.4 L4.8 79.7 Z" fill="#3d1370" stroke="#b7a2e6" stroke-width="0.35" stroke-opacity="0.45"/><path d="M51.3 58.7 L58.6 43.3 L61.1 54.3 Z" fill="#521890" stroke="#b7a2e6" stroke-width="0.35" stroke-opacity="0.45"/><path d="M44.7 87.6 L45.5 64.7 L17.9 85.1 Z" fill="#0e2022" stroke="#b7a2e6" stroke-width="0.35" stroke-opacity="0.45"/><path d="M39.4 107.6 L41.5 110.7 L37.9 92.8 Z" fill="#2e1b5e" stroke="#b7a2e6" stroke-width="0.35" stroke-opacity="0.45"/><path d="M94.0 60.9 L92.1 39.6 L93.8 60.7 Z" fill="#1a3a40" stroke="#b7a2e6" stroke-width="0.35" stroke-opacity="0.45"/><path d="M47.6 23.3 L59.6 25.3 L57.3 26.6 Z" fill="#551b96" stroke="#b7a2e6" stroke-width="0.35" stroke-opacity="0.45"/><path d="M11.2 40.0 L22.5 42.8 L17.6 62.7 Z" fill="#241548" stroke="#b7a2e6" stroke-width="0.35" stroke-opacity="0.45"/><path d="M71.7 53.9 L70.8 51.0 L67.0 39.5 Z" fill="#431578" stroke="#b7a2e6" stroke-width="0.35" stroke-opacity="0.45"/><path d="M71.9 22.1 L71.0 15.6 L62.4 16.4 Z" fill="#3d1370" stroke="#b7a2e6" stroke-width="0.35" stroke-opacity="0.45"/><path d="M92.3 52.9 L90.9 35.0 L86.2 33.1 Z" fill="#5f1fa4" stroke="#b7a2e6" stroke-width="0.35" stroke-opacity="0.45"/><path d="M1.2 80.6 L9.6 91.3 L-2.7 83.3 Z" fill="#11292b" stroke="#b7a2e6" stroke-width="0.35" stroke-opacity="0.45"/><path d="M6.2 113.8 L16.3 108.8 L10.9 103.0 Z" fill="#5f1fa4" stroke="#b7a2e6" stroke-width="0.35" stroke-opacity="0.45"/><path d="M-2.9 14.5 L5.6 19.8 L2.5 28.1 Z" fill="#2e1b5e" stroke="#b7a2e6" stroke-width="0.35" stroke-opacity="0.45"/><path d="M21.8 12.4 L4.2 31.6 L3.5 22.5 Z" fill="#2a1050" stroke="#b7a2e6" stroke-width="0.35" stroke-opacity="0.45"/><path d="M4.2 70.3 L0.1 80.3 L0.9 77.3 Z" fill="#3d1370" stroke="#b7a2e6" stroke-width="0.35" stroke-opacity="0.45"/><path d="M74.1 97.0 L64.6 89.4 L71.0 96.4 Z" fill="#551b96" stroke="#b7a2e6" stroke-width="0.35" stroke-opacity="0.45"/><path d="M79.9 81.9 L93.6 84.1 L87.8 83.4 Z" fill="#342672" stroke="#b7a2e6" stroke-width="0.35" stroke-opacity="0.45"/><path d="M24.5 61.3 L11.8 71.2 L14.4 63.7 Z" fill="#1b1438" stroke="#b7a2e6" stroke-width="0.35" stroke-opacity="0.45"/><path d="M1.2 53.0 L-1.7 55.1 L11.5 52.7 Z" fill="#0e2022" stroke="#b7a2e6" stroke-width="0.35" stroke-opacity="0.45"/><path d="M65.7 65.2 L53.2 57.2 L57.2 68.3 Z" fill="#431578" stroke="#b7a2e6" stroke-width="0.35" stroke-opacity="0.45"/><path d="M16.9 116.7 L21.6 107.9 L13.8 115.9 Z" fill="#14262c" stroke="#b7a2e6" stroke-width="0.35" stroke-opacity="0.45"/><path d="M46.0 16.4 L62.1 32.9 L41.4 33.7 Z" fill="#11292b" stroke="#b7a2e6" stroke-width="0.35" stroke-opacity="0.45"/><path d="M-2.1 25.2 L10.6 39.1 L10.0 24.3 Z" fill="#2a1050" stroke="#b7a2e6" stroke-width="0.35" stroke-opacity="0.45"/><path d="M57.9 100.9 L72.4 95.1 L59.1 104.9 Z" fill="#2a1050" stroke="#b7a2e6" stroke-width="0.35" stroke-opacity="0.45"/></g>
<text x="98.5" y="49.6" text-anchor="middle" font-family="DejaVu Sans, Liberation Sans, sans-serif" font-size="8.6" fill="#d6d2e2" opacity="1">VHS Intro</text></svg><div class="num">8</div></div>
</div><!--/th-->
<div id="ph"></div><svg id="phh" viewBox="0 0 13 21" preserveAspectRatio="none"><path d="M1.5 0 H11.500 Q13 0 13 1.500 V15 L6.500 21 L0 15 V1.500 Q0 0 1.500 0 Z" fill="#f0595c"/></svg>
<div id="scroll"></div>
<div id="scrollthumb"></div>
<div id="chat"><svg width="78" height="78" viewBox="0 0 78 78"><circle cx="37.800" cy="38.300" r="37.700" fill="#0a8ef5"/><path d="M37.500 21.600 A16.900 16.900 0 1 0 37.500 55.400 L54.300 55.400 L49.450 50.450 A16.900 16.900 0 0 0 37.500 21.600 Z" fill="none" stroke="#fff" stroke-width="3.800" stroke-linejoin="round"/></svg></div>
</body>
</html>
